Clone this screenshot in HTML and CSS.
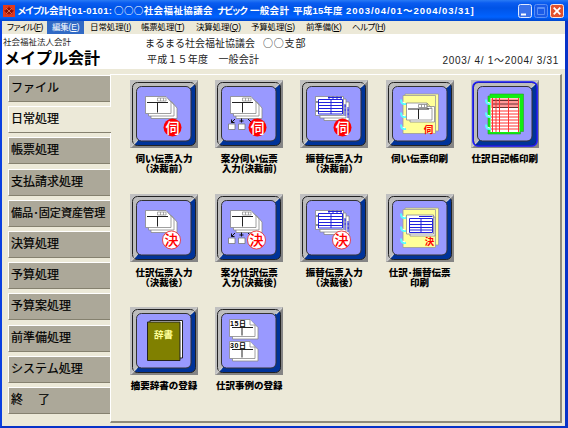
FILE: index.html
```html
<!DOCTYPE html>
<html lang="ja">
<head>
    <meta charset="UTF-8">
    <title>メイプル会計</title>
    <link rel="stylesheet" href="styles.css">
</head>
<body>
    <!-- shared icon parts -->
    <svg class="defs" width="0" height="0">
        <defs>
            <linearGradient id="bevel" x1="0" y1="0" x2="1" y2="1">
                <stop offset="50%" stop-color="#bdbdbd"/>
                <stop offset="50%" stop-color="#003399"/>
            </linearGradient>
            <symbol id="frame" viewBox="0 0 68 68">
                <path d="M0 0H68L0 68z" fill="#c0c0c0"/>
                <path d="M68 0V68H0z" fill="#858585"/>
                <rect x="2.5" y="2.5" width="63" height="63" rx="5" fill="url(#bevel)" stroke="#222"/>
                <path d="M1 67L7 61M67 1L61 7" stroke="#ccc" stroke-width="1.2"/>
                <rect x="6.5" y="6.5" width="54.5" height="54.5" rx="5" fill="#9999ff" stroke="#333"/>
            </symbol>
            <symbol id="slips" viewBox="0 0 68 68">
                <g fill="#fff" stroke="#888" stroke-width=".8">
                    <path d="M21 22H42L47 28V38.5H21z"/>
                    <path d="M18.5 19.500H39L44 25V36H18.500z"/>
                    <path d="M15.500 16.500H36L41 22V33.500H15.500z"/>
                    <path d="M27.500 18H36V21H27.500zM30.500 18V21M33.500 18V21" stroke-width=".7"/>
                </g>
                <path d="M17 22.500H38M27.500 22.500V32.500" stroke="#222" fill="none"/>
            </symbol>
            <symbol id="ledger" viewBox="0 0 68 68">
                <g fill="#fff" stroke="#888" stroke-width=".8">
                    <path d="M24 22H49V40.500H24z"/>
                    <path d="M20 19H46V38H20z"/>
                    <path d="M15.500 16.500H43.500V35.500H15.500z"/>
                </g>
                <path d="M18.500 19.500H42.500V34H18.500zM18.500 22.500H42.500M18.500 25.500H42.500M18.500 28.500H42.500M18.500 31.500H42.500M31 19.500V34M28 17.500H42M45 24V36M48 27V38" fill="none" stroke="#2222dd"/>
                <path d="M29 16.500V19M33 16.500V19M37 16.500V19M41 16.500V19M44.500 26H46M44.500 30H46M47.500 30H49M47.500 34H49" stroke="#2222dd"/>
                <path d="M16 22H18.500M16 31H18.500" stroke="#222"/>
            </symbol>
            <symbol id="split" viewBox="0 0 68 68">
                <path d="M13.500 44H20V49.500H13.500zM23.500 44H30V49.500H23.500z" fill="#fff" stroke="#777" stroke-width=".8"/>
                <path d="M20 39L16.500 42.500M16.500 39.500V42.500H19.500M26.500 38.500V42.500M24.500 41H28.500M33 39L36 42" fill="none" stroke="#111"/>
            </symbol>
            <symbol id="seal-ask" viewBox="0 0 68 68">
                <circle cx="42.500" cy="47.500" r="9" fill="#f00"/>
                <text class="glyph" x="42.500" y="52.500" font-size="14" fill="#fff">伺</text>
            </symbol>
            <symbol id="seal-done" viewBox="0 0 68 68">
                <circle cx="41.500" cy="46" r="9" fill="#fff" stroke="#e22" stroke-width=".8"/>
                <text class="glyph" x="41.500" y="51" font-size="14" fill="#f00">決</text>
            </symbol>
            <symbol id="rings" viewBox="0 0 68 68">
                <path d="M15.500 19.500C14 22 16 24.500 20 24M15.500 32.500C14 35 16 37.500 20 37M15.500 44.500C14 47 16 49.500 20 49" fill="none" stroke="#5ff" stroke-width="2"/>
                <path d="M16.500 22L19 23M16.500 35L19 36M16.500 47L19 48" stroke="#fff"/>
            </symbol>
            <symbol id="notebook" viewBox="0 0 68 68">
                <path d="M19 14H52.500V51H19z" fill="#ffff99" stroke="#999" stroke-width=".8"/>
                <path d="M17 15.500H49.500V53.500H17z" fill="#ffff99" stroke="#999" stroke-width=".8"/>
            </symbol>
            <symbol id="day" viewBox="0 0 68 68">
                <g fill="#fff" stroke="#888" stroke-width=".8">
                    <path d="M17.500 15.500H38L43 20.500V32H17.500z"/>
                    <path d="M14.500 12.500H35L40 18V29.500H14.500z"/>
                    <path d="M35 12.500V18H40"/>
                </g>
                <path d="M17 20.500H38M27 20.500V28.500" stroke="#222" fill="none"/>
            </symbol>
        </defs>
    </svg>

    <div class="window">
        <div class="titlebar">
            <svg class="app-icon" viewBox="0 0 12 12">
                <rect width="12" height="12" fill="#e23a1c"/>
                <path d="M6 1L7 3.500L9 2.500L8.500 5L11 5.500L9 7.500L9.500 9.500L6.500 8.500L6 11L5.500 8.500L2.500 9.500L3 7.500L1 5.500L3.500 5L3 2.500L5 3.500z" fill="#8d0d05"/>
                <path d="M3 3L9 9M9 3L3 9" stroke="#ffb080" stroke-width=".6"/>
            </svg>
            <div class="title">
                <span class="t-app">メイプル</span><span class="t-app2">会計</span><span class="t-code">[01-0101:</span><span class="t-org">○○○社会福祉協議会</span><span class="t-navi">ナビック</span><span class="t-kind">一般会計</span><span class="t-year">平成15年度</span><span class="t-date">2003/04/01～2004/03/31]</span>
            </div>
            <div class="controls">
                <svg class="ctl" viewBox="0 0 14 14"><rect x=".5" y=".5" width="13" height="13" rx="2" fill="#3a72ea" stroke="#dfe9ff"/><path d="M3 10.500H8" stroke="#fff" stroke-width="2"/></svg>
                <svg class="ctl" viewBox="0 0 14 14"><rect x=".5" y=".5" width="13" height="13" rx="2" fill="#1a5be8" stroke="#5b8ff5"/><path d="M3.500 3.500H10.500V10.500H3.500zM3.500 4.500H10.500" fill="none" stroke="#5b8ff5"/></svg>
                <svg class="ctl" viewBox="0 0 14 14"><rect x=".5" y=".5" width="13" height="13" rx="2" fill="#e2512d" stroke="#fbe4dc"/><path d="M3.700 3.700L10.300 10.300M10.300 3.700L3.700 10.300" stroke="#fff" stroke-width="1.800"/></svg>
            </div>
        </div>

        <div class="menubar">
            <div class="menu m-file">ファイル(<u>F</u>)</div>
            <div class="menu m-edit">編集(<u>E</u>)</div>
            <div class="menu m-day">日常処理(<u>I</u>)</div>
            <div class="menu m-long">帳票処理(<u>T</u>)</div>
            <div class="menu m-long">決算処理(<u>Q</u>)</div>
            <div class="menu m-long">予算処理(<u>S</u>)</div>
            <div class="menu m-prep">前準備(<u>K</u>)</div>
            <div class="menu m-help">ヘルプ(<u>H</u>)</div>
        </div>

        <div class="header">
            <div class="brand">
                <div class="brand-sub">社会福祉法人会計</div>
                <div class="brand-name">メイプル会計</div>
            </div>
            <div class="org">
                <div class="org-name">まるまる社会福祉協議会<span class="branch">○○支部</span></div>
                <div class="org-year">平成１５年度　一般会計</div>
            </div>
            <div class="period">2003/ 4/ 1～2004/ 3/31</div>
        </div>

        <div class="main">
            <div class="tabs">
                <div class="tab">ファイル</div>
                <div class="tab active">日常処理</div>
                <div class="tab">帳票処理</div>
                <div class="tab">支払請求処理</div>
                <div class="tab tight">備品･固定資産管理</div>
                <div class="tab">決算処理</div>
                <div class="tab">予算処理</div>
                <div class="tab">予算案処理</div>
                <div class="tab">前準備処理</div>
                <div class="tab">システム処理</div>
                <div class="tab wide">終　了</div>
            </div>
            <div class="panel">
                <div class="item">
                    <svg class="icon" viewBox="0 0 68 68"><use href="#frame"/><use href="#slips"/><use href="#seal-ask"/></svg>
                    <div class="label">伺い伝票入力<br>（決裁前）</div>
                </div>
                <div class="item">
                    <svg class="icon" viewBox="0 0 68 68"><use href="#frame"/><use href="#slips"/><use href="#split"/><use href="#seal-ask"/></svg>
                    <div class="label">案分伺い伝票<br>入力(決裁前)</div>
                </div>
                <div class="item">
                    <svg class="icon" viewBox="0 0 68 68"><use href="#frame"/><use href="#ledger"/><use href="#seal-ask"/></svg>
                    <div class="label">振替伝票入力<br>（決裁前）</div>
                </div>
                <div class="item">
                    <svg class="icon" viewBox="0 0 68 68">
                        <use href="#frame"/><use href="#notebook"/>
                        <g transform="translate(5 6.500)"><path d="M19 20H43.500V35.500H19z" fill="#fff" stroke="#888" stroke-width=".8"/><path d="M15.500 16.500H36L41 22V33.500H15.500zM27.500 18H36V21H27.500zM30.500 18V21M33.500 18V21M36 16.500V22H41" fill="#fff" stroke="#888" stroke-width=".8"/><path d="M17 22.500H38M27.500 22.500V32.500" stroke="#222"/></g>
                        <use href="#rings"/>
                        <text class="glyph small" x="42.500" y="52.500" fill="#f00">伺</text>
                    </svg>
                    <div class="label">伺い伝票印刷</div>
                </div>
                <div class="item">
                    <svg class="icon" viewBox="0 0 68 68">
                        <use href="#frame"/>
                        <rect x="2" y="2" width="64" height="64" rx="5" fill="none" stroke="#1a1aff" stroke-width="1.600"/>
                        <path d="M19 14H52.500V51.500H49.500V54H17V16H19z" fill="#11ee11" stroke="#2a9a2a" stroke-width=".6"/>
                        <path d="M19.500 18H48.500V52H19.500z" fill="#fff"/>
                        <path d="M20 18.500H48V28H20z" fill="#f99"/>
                        <path d="M21 20.500H47.500M21 24H47.500M21 27.500H47.500" stroke="#633"/>
                        <path d="M20 31H48.500M20 34H48.500M20 37H48.500M20 40H48.500M20 43H48.500M20 46H48.500M20 49H48.500M21.500 18V52M25 18V52M28.500 18V52M37.500 18V52M47.500 18V52" stroke="#f33"/>
                        <use href="#rings"/>
                    </svg>
                    <div class="label">仕訳日記帳印刷</div>
                </div>

                <div class="item">
                    <svg class="icon" viewBox="0 0 68 68"><use href="#frame"/><use href="#slips"/><use href="#seal-done"/></svg>
                    <div class="label">仕訳伝票入力<br>（決裁後）</div>
                </div>
                <div class="item">
                    <svg class="icon" viewBox="0 0 68 68"><use href="#frame"/><use href="#slips"/><use href="#split"/><use href="#seal-done"/></svg>
                    <div class="label">案分仕訳伝票<br>入力(決裁後)</div>
                </div>
                <div class="item">
                    <svg class="icon" viewBox="0 0 68 68"><use href="#frame"/><use href="#ledger"/><use href="#seal-done"/></svg>
                    <div class="label">振替伝票入力<br>（決裁後）</div>
                </div>
                <div class="item">
                    <svg class="icon" viewBox="0 0 68 68">
                        <use href="#frame"/><use href="#notebook"/>
                        <path d="M24 23H49V42H24z" fill="#fff" stroke="#888" stroke-width=".8"/>
                        <path d="M20.500 21H47.500V40H20.500z" fill="#fff" stroke="#888" stroke-width=".8"/>
                        <path d="M23.500 24.500H46.500V38.500H23.500zM23.500 27.500H46.500M23.500 30.500H46.500M23.500 33.500H46.500M23.500 36H46.500M35 24.500V38.500M33 22.500H46.500" fill="none" stroke="#2222dd"/>
                        <use href="#rings"/>
                        <text class="glyph small" x="43.500" y="51" fill="#f00">決</text>
                    </svg>
                    <div class="label">仕訳･振替伝票<br>印刷</div>
                </div>
                <div class="item"></div>

                <div class="item">
                    <svg class="icon" viewBox="0 0 68 68">
                        <use href="#frame"/>
                        <path d="M20 13.500H52.500V51H20z" fill="#fff" stroke="#222"/>
                        <path d="M17.500 15H50V53.500H17.500z" fill="#808000" stroke="#222"/>
                        <text class="glyph small" x="33.500" y="31" fill="#ffff99">辞書</text>
                    </svg>
                    <div class="label">摘要辞書の登録</div>
                </div>
                <div class="item">
                    <svg class="icon" viewBox="0 0 68 68">
                        <use href="#frame"/><use href="#day"/><use href="#day" y="22"/>
                        <text class="day-text" x="15" y="19">15日</text>
                        <text class="day-text" x="15" y="41">30日</text>
                    </svg>
                    <div class="label">仕訳事例の登録</div>
                </div>
            </div>
        </div>
    </div>
</body>
</html>
```

FILE: styles.css
```css
body {
    margin: 0;
    font-family: "Liberation Sans", "Noto Sans CJK JP", sans-serif;
    color: #000;
    overflow: hidden;
}

.defs {
    position: absolute;
}

.window {
    box-sizing: border-box;
    width: 568px;
    height: 428px;
    display: flex;
    flex-direction: column;
    background: #ece9d8;
    border: solid #0a3fe0;
    border-width: 0 3px 2px 2px;
    border-right-color: #0833c8;
    border-bottom-color: #0833c8;
}

/* title bar */
.titlebar {
    height: 21px;
    margin: 0 -3px 0 -2px;
    padding: 0 4px 0 3px;
    display: flex;
    align-items: center;
    background: linear-gradient(#2a7bf4 0, #0a5cf0 3px, #0053e6 8px, #0062ff 17px, #0046cc 100%);
}

.app-icon {
    width: 12px;
    height: 12px;
    margin-right: 2px;
}

.title {
    flex: 1;
    display: flex;
    height: 21px;
    line-height: 21px;
    color: #fff;
    font-weight: bold;
    font-size: 9.5px;
    white-space: nowrap;
}

.title span {
    flex: none;
}

.t-app { width: 32px; letter-spacing: -1.8px; }
.t-app2 { width: 19px; letter-spacing: 0; }
.t-code { width: 46px; letter-spacing: 0.35px; }
.t-org { width: 103px; font-family: "Noto Sans CJK JP", sans-serif; letter-spacing: 0.4px; }
.t-navi { width: 33px; letter-spacing: -2.2px; }
.t-kind { width: 43px; letter-spacing: 0.3px; }
.t-year { width: 53px; letter-spacing: 0.2px; }
.t-date { letter-spacing: 0.95px; }

.controls {
    display: flex;
    gap: 2px;
}

.ctl {
    width: 14px;
    height: 14px;
}

/* menu */
.menubar {
    height: 13px;
    display: flex;
    line-height: 13px;
    font-size: 8.5px;
    white-space: nowrap;
}

.menu {
    box-sizing: border-box;
    padding-left: 5px;
    letter-spacing: -0.2px;
    font-feature-settings: "palt";
}

.m-file { width: 45px; letter-spacing: -0.65px; }
.m-edit { width: 37px; background: #316ac5; color: #fff; }
.m-day { width: 52px; padding-left: 6px; letter-spacing: -0.1px; }
.m-long { width: 55px; }
.m-prep { width: 46px; }
.m-help { letter-spacing: -0.5px; }

/* company header */
.header {
    height: 35px;
    display: flex;
    background: #fff;
    color: #222;
    white-space: nowrap;
}

.brand {
    width: 142px;
    padding-left: 1px;
}

.brand-sub {
    font-size: 8.5px;
    height: 15px;
    line-height: 17px;
}

.brand-name {
    padding-left: 1px;
    font-size: 16px;
    line-height: 20px;
    font-weight: bold;
    color: #000;
}

.org {
    flex: 1;
    font-size: 10px;
}

.org-name {
    height: 17px;
    line-height: 17px;
}

.branch {
    margin-left: 8px;
    font-family: "Noto Sans CJK JP", sans-serif;
    letter-spacing: 0.8px;
}

.org-year {
    padding-left: 2px;
    line-height: 17px;
    letter-spacing: 0.2px;
}

.period {
    align-self: flex-end;
    padding: 0 6px 0 0;
    font-size: 10px;
    line-height: 17px;
    letter-spacing: 0.7px;
    white-space: pre;
}

/* tabs and panel */
.main {
    flex: 1;
    display: flex;
    padding: 5px 3px 5px 6px;
}

.tabs {
    width: 102px;
    display: flex;
    flex-direction: column;
    gap: 4.2px;
    padding-top: 1px;
}

.tab {
    box-sizing: border-box;
    height: 27px;
    padding-left: 2px;
    background: #aca899;
    border-top: 1px solid #fff;
    border-left: 1px solid #fff;
    border-bottom: 1px solid #85816f;
    font-size: 12px;
    line-height: 22px;
    font-family: "Noto Sans CJK JP", sans-serif;
    -webkit-text-stroke: 0.2px #000;
    white-space: nowrap;
}

.tab.active {
    position: relative;
    background: #ece9d8;
    margin-right: -1px;
}

.tab.tight {
    font-size: 11.1px;
}

.tab.wide {
    letter-spacing: 1.5px;
}

.panel {
    flex: 1;
    display: grid;
    grid-template-columns: repeat(5, 85.2px);
    grid-template-rows: repeat(3, 113.5px);
    padding: 5px 0 0 11px;
    border: 1px solid #fff;
    border-right: 2px solid #8f8b7b;
    border-bottom: 2px solid #8f8b7b;
}

.item {
    width: 84px;
    display: flex;
    flex-direction: column;
    align-items: center;
}

.icon {
    width: 68px;
    height: 68px;
}

.label {
    margin-top: 5px;
    font-size: 9.5px;
    line-height: 10px;
    font-weight: 900;
    font-family: "Noto Sans CJK JP", sans-serif;
    text-align: center;
    white-space: nowrap;
}

.glyph {
    font-family: "Noto Sans CJK JP", sans-serif;
    font-weight: 500;
    text-anchor: middle;
}

.glyph.small {
    font-size: 9.5px;
    font-weight: bold;
}

.day-text {
    font-family: "Liberation Sans", "Noto Sans CJK JP", sans-serif;
    font-size: 7px;
    font-weight: bold;
    letter-spacing: 0.6px;
}
```
